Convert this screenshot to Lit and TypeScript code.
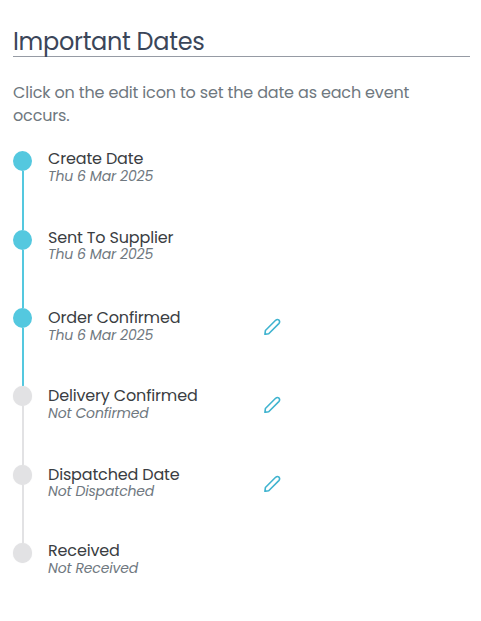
import { LitElement, html, css, svg } from "lit";
import { customElement } from "lit/decorators.js";
import { classMap } from "lit/directives/class-map.js";
import { styleMap } from "lit/directives/style-map.js";

interface Step {
  label: string;
  date: string;
  done: boolean;
  joined: boolean;
  editable: boolean;
  height: number;
  offset: number;
  gap: number;
}

const steps: Step[] = [
  { label: "Create Date", date: "Thu 6 Mar 2025", done: true, joined: true, editable: false, height: 78.5, offset: 0, gap: 1 },
  { label: "Sent To Supplier", date: "Thu 6 Mar 2025", done: true, joined: true, editable: false, height: 78.5, offset: 0.5, gap: 0 },
  { label: "Order Confirmed", date: "Thu 6 Mar 2025", done: true, joined: true, editable: true, height: 78, offset: 2, gap: 1 },
  { label: "Delivery Confirmed", date: "Not Confirmed", done: false, joined: true, editable: true, height: 78.6, offset: 2, gap: 1 },
  { label: "Dispatched Date", date: "Not Dispatched", done: false, joined: true, editable: true, height: 78.4, offset: 2.4, gap: 0 },
  { label: "Received", date: "Not Received", done: false, joined: false, editable: false, height: 30, offset: 0, gap: 1 },
];

const pencil = svg`<path d="M.9 16.3 L1.4 12.5 L11.6 2.3 Q13.3 .8 15 2.2 Q16.3 3.9 14.8 5.6 L4.7 15.7 Z"/>`;

@customElement("app-root")
export class AppRoot extends LitElement {
  static styles = css`
    :host {
      display: block;
      box-sizing: border-box;
      height: 621px;
      padding: 25px 11px 0 13px;
      background: #fff;
      font-family: Poppins, Inter, sans-serif;
      letter-spacing: -0.16px;
      color: #3a3d42;
    }
    h1 {
      box-sizing: border-box;
      margin: 0;
      height: 32px;
      line-height: 33px;
      border-bottom: 1px solid #969ba4;
      font-size: 24px;
      font-weight: 400;
      letter-spacing: -0.3px;
      color: #3b4659;
      white-space: nowrap;
    }
    .intro {
      margin: 24px 0 24px;
      font-size: 16px;
      line-height: 23px;
      color: #6f7880;
      white-space: nowrap;
    }
    .step {
      display: grid;
      grid-template-columns: 19px 200px 18px;
      column-gap: 16px;
    }
    .rail {
      display: flex;
      flex-direction: column;
      align-items: center;
    }
    .dot {
      flex: none;
      width: 19px;
      height: 20px;
      border-radius: 50%;
      background: #e2e2e4;
      box-shadow: 0 0 1px #e2e2e4;
    }
    .line {
      flex: 1;
      width: 2px;
      margin-left: 1px;
      background: #e2e2e4;
    }
    .done .dot,
    .done .line {
      background: #54c8df;
    }
    .done .dot {
      box-shadow: none;
    }
    .label {
      font-size: 16px;
      line-height: 16px;
      white-space: nowrap;
    }
    .date {
      font-size: 14px;
      line-height: 17px;
      font-style: italic;
      color: #6f7880;
      white-space: nowrap;
    }
    .edit {
      width: 17px;
      height: 17px;
      margin-top: 10px;
      fill: none;
      stroke: #3fb3cf;
      stroke-width: 1.6;
      stroke-linejoin: round;
    }
  `;

  render() {
    return html`
      <h1>Important Dates</h1>
      <div class="intro">
        Click on the edit icon to set the date as each event<br />
        occurs.
      </div>
      ${steps.map(
        (s) => html`
          <div class=${classMap({ step: true, done: s.done })} style=${styleMap({ height: `${s.height}px` })}>
            <div class="rail">
              <div class="dot"></div>
              ${s.joined ? html`<div class="line"></div>` : ""}
            </div>
            <div style=${styleMap({ paddingTop: `${s.offset}px` })}>
              <div class="label" style=${styleMap({ marginBottom: `${s.gap}px` })}>${s.label}</div>
              <div class="date">${s.date}</div>
            </div>
            ${s.editable ? html`<svg class="edit" viewBox="0 0 17 17">${pencil}</svg>` : ""}
          </div>
        `
      )}
    `;
  }
}
